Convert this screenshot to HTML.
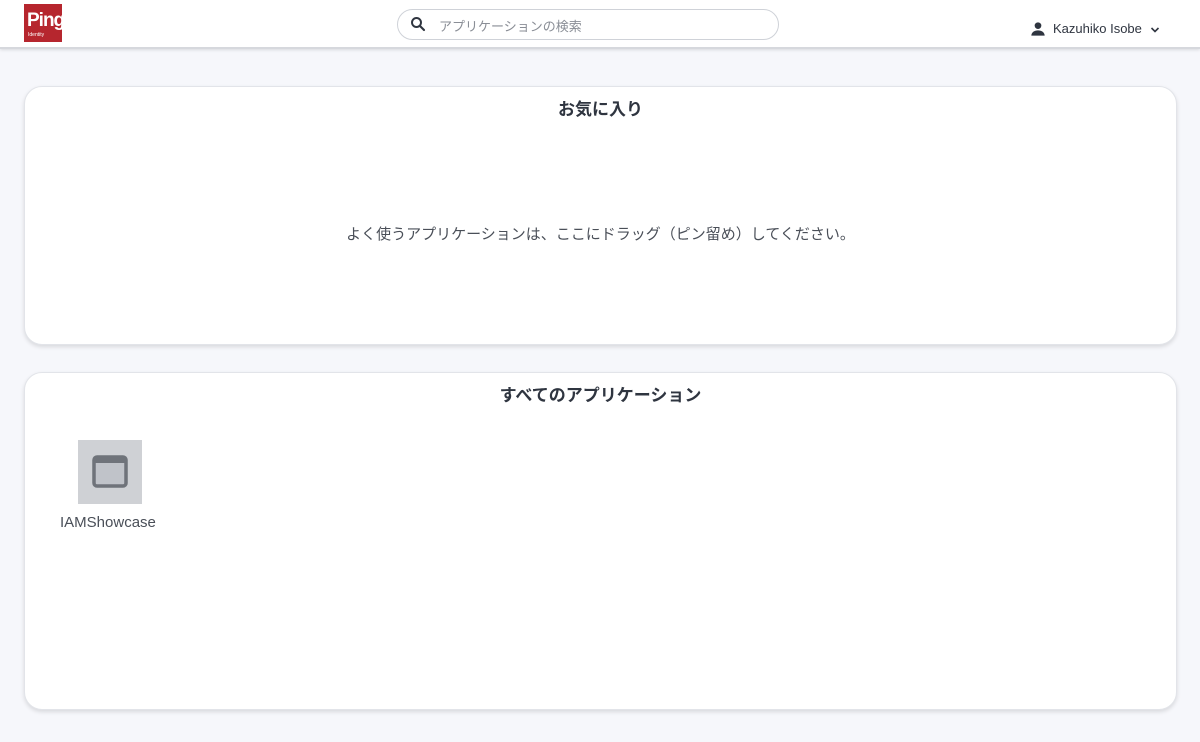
<!DOCTYPE html>
<html><head><meta charset="utf-8"><style>
*{box-sizing:border-box;margin:0;padding:0}
body{width:1200px;height:742px;background:#f6f7fb;font-family:"Liberation Sans","Noto Sans CJK JP",sans-serif;position:relative;overflow:hidden}
.hdr{position:absolute;left:0;top:0;width:1200px;height:49px;background:#fff;border-bottom:2px solid #d6d8dd;box-shadow:0 1px 3px rgba(0,0,0,.12)}
.logo{position:absolute;left:24px;top:4px;width:38px;height:38px;background:#b6262e;color:#fff}
.logo b{position:absolute;left:3px;top:6px;font-size:19px;font-weight:bold;letter-spacing:-1px}
.logo i{position:absolute;left:4px;top:28px;font-size:5px;font-style:normal}
.search{position:absolute;left:397px;top:9px;width:382px;height:31px;border:1.5px solid #cfd2d8;border-radius:16px;background:#fff}
.search span{position:absolute;left:41px;top:6px;font-size:13px;color:#8a8e96}
.user{position:absolute;left:1030px;top:21px;font-size:13px;color:#2f3540}
.card{position:absolute;left:24px;width:1153px;background:#fff;border:1px solid #e2e4e9;border-radius:18px;box-shadow:0 2px 4px rgba(0,0,0,.12)}
.card h2{text-align:center;font-size:17px;font-weight:bold;color:#2f3540;margin-top:8px}
.msg{position:absolute;left:0;width:100%;top:136px;text-align:center;font-size:15px;color:#4a4f58}
.app{position:absolute;left:53px;top:67px;width:64px;height:64px;background:#cfd1d5}
.appl{position:absolute;left:35px;top:141px;font-size:15px;color:#4a4f58}
</style></head><body>
<div class="hdr">
<div class="logo"><b>Ping</b><i>Identity</i></div>
<div class="search">
<svg style="position:absolute;left:11px;top:5px" width="18" height="18" viewBox="0 0 24 24"><circle cx="10" cy="10" r="6" fill="none" stroke="#2f3540" stroke-width="2.6"/><path d="M14.5 14.5L20 20" stroke="#2f3540" stroke-width="2.8" stroke-linecap="round"/></svg>
<span>アプリケーションの検索</span></div>
<div class="user"><svg style="position:absolute;left:0;top:0" width="16" height="16" viewBox="0 0 24 24"><circle cx="12" cy="7" r="5" fill="#2f3540"/><path d="M2 22c0-6 6-8 10-8s10 2 10 8z" fill="#2f3540"/></svg>
<span style="position:absolute;left:23px;top:0;white-space:nowrap">Kazuhiko Isobe</span>
<svg style="position:absolute;left:120px;top:5px" width="10" height="8" viewBox="0 0 10 8"><path d="M1.5 2l3.5 3.5L8.5 2" fill="none" stroke="#2f3540" stroke-width="1.6"/></svg></div>
</div>
<div class="card" style="top:86px;height:259px"><h2>お気に入り</h2>
<div class="msg">よく使うアプリケーションは、ここにドラッグ（ピン留め）してください。</div></div>
<div class="card" style="top:372px;height:338px"><h2>すべてのアプリケーション</h2>
<div class="app"><svg style="position:absolute;left:14px;top:15px" width="36" height="33" viewBox="0 0 36 33"><rect x="2" y="2" width="32" height="29" rx="3" fill="#c0c3c9" stroke="#6f737a" stroke-width="3.5"/><rect x="2" y="2" width="32" height="6" fill="#6f737a"/></svg></div>
<div class="appl">IAMShowcase</div></div>
</body></html>
